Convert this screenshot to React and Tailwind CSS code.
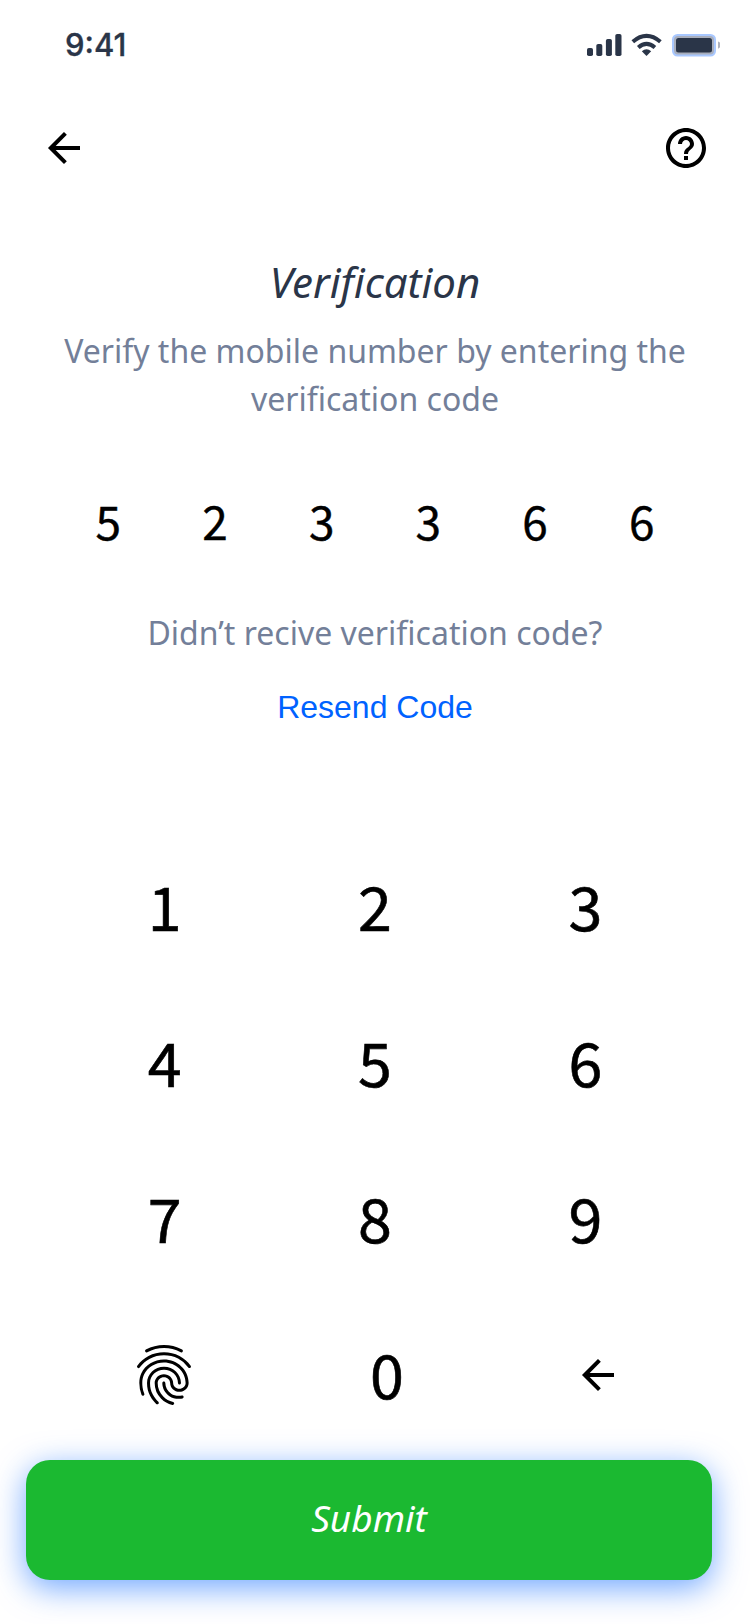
import { MdFingerprint, MdHelpOutline } from "react-icons/md";

const code = ["5", "2", "3", "3", "6", "6"];
const keys = ["1", "2", "3", "4", "5", "6", "7", "8", "9"];

function Arrow() {
  return (
    <svg className="size-12" viewBox="0 0 24 24" fill="none" stroke="black" strokeWidth="2">
      <path d="M20 12H5" />
      <path d="M12.7 4.7L5.4 12L12.7 19.3" />
    </svg>
  );
}

function StatusIcons() {
  return (
    <svg className="h-9 w-[140px]" viewBox="580 26 140 36">
      <g fill="#2a3548">
        <rect x="587" y="48" width="6" height="8" rx="1.8" />
        <rect x="596.3" y="44" width="6" height="12" rx="1.8" />
        <rect x="605.9" y="39" width="6" height="17" rx="1.8" />
        <rect x="615.3" y="34" width="6.2" height="22" rx="1.8" />
        <path d="M641.8 51.2Q646.5 47.2 651.2 51.2L646.5 56Z" />
      </g>
      <g fill="none" stroke="#2a3548" strokeWidth="4">
        <path d="M632.8 41.8Q646.5 30 660.4 41.8" />
        <path d="M638.3 47.5Q646.5 40.3 654.9 47.5" />
      </g>
      <rect x="672" y="34" width="44" height="22.500" rx="5.500" fill="#a9c8ff" />
      <rect x="674" y="36" width="40" height="18.500" rx="4" fill="#a9afbd" />
      <rect x="676" y="38" width="36" height="14.500" rx="2.500" fill="#2a3548" />
      <path d="M718 41.5Q720.7 42.500 720.7 45T718 48.8Z" fill="#b0b3be" />
    </svg>
  );
}

export default function App() {
  return (
    <main className="flex h-[1624px] w-[750px] flex-col overflow-hidden bg-white font-['Noto_Sans',sans-serif] text-black">
      <div className="flex h-[88px] items-center justify-between pr-[30px] pl-[65px]">
        <span className="pt-px font-['Inter',sans-serif] text-[31px] leading-9 font-medium text-[#2a3548] [-webkit-text-stroke:0.3px]">9:41</span>
        <StatusIcons />
      </div>
      <header className="flex h-[120px] items-center justify-between px-10">
        <button aria-label="Back"><Arrow /></button>
        <button aria-label="Help"><MdHelpOutline className="size-12" /></button>
      </header>
      <section className="mt-[46px] flex flex-col items-center text-center">
        <h1 className="text-[42px] leading-[56px] text-[#2a3548] italic">Verification</h1>
        <p className="mt-[17px] text-[32px] leading-12 whitespace-nowrap text-[#737f99]">
          Verify the mobile number by entering the<br />verification code
        </p>
        <div className="mt-[67px] grid w-[640px] grid-cols-6 text-center font-['Noto_Sans_CJK_JP',sans-serif] text-[46px] leading-[60px] [-webkit-text-stroke:0.4px]">
          {code.map((d, i) => <span key={i}>{d}</span>)}
        </div>
        <p className="mt-[59px] text-[32px] leading-12 text-[#737f99]">Didn’t recive verification code?</p>
        <button className="mt-[26px] font-['Liberation_Sans',sans-serif] text-[32px] leading-12 text-[#0062ff]">Resend Code</button>
      </section>
      <section className="mt-[98px] grid w-[631px] grid-cols-3 self-center text-center font-['Noto_Sans_CJK_JP',sans-serif] text-[61px] leading-[151px] [-webkit-text-stroke:0.6px]">
        {keys.map((k) => <button key={k} className="flex h-[156px] items-start justify-center">{k}</button>)}
        <button aria-label="Fingerprint" className="flex h-[156px] items-center justify-center pr-0.5"><MdFingerprint className="size-[72px]" /></button>
        <button className="flex h-[156px] items-start justify-center pl-6">0</button>
        <button aria-label="Delete" className="flex h-[156px] items-center justify-center pl-[26px]"><Arrow /></button>
      </section>
      <button className="mt-[7px] ml-[26px] h-[120px] w-[686px] shrink-0 rounded-[24px] bg-[#1bb931] pb-1 text-[37px] text-white italic shadow-[0_8px_32px_rgba(0,98,255,0.56)]">Submit</button>
    </main>
  );
}
